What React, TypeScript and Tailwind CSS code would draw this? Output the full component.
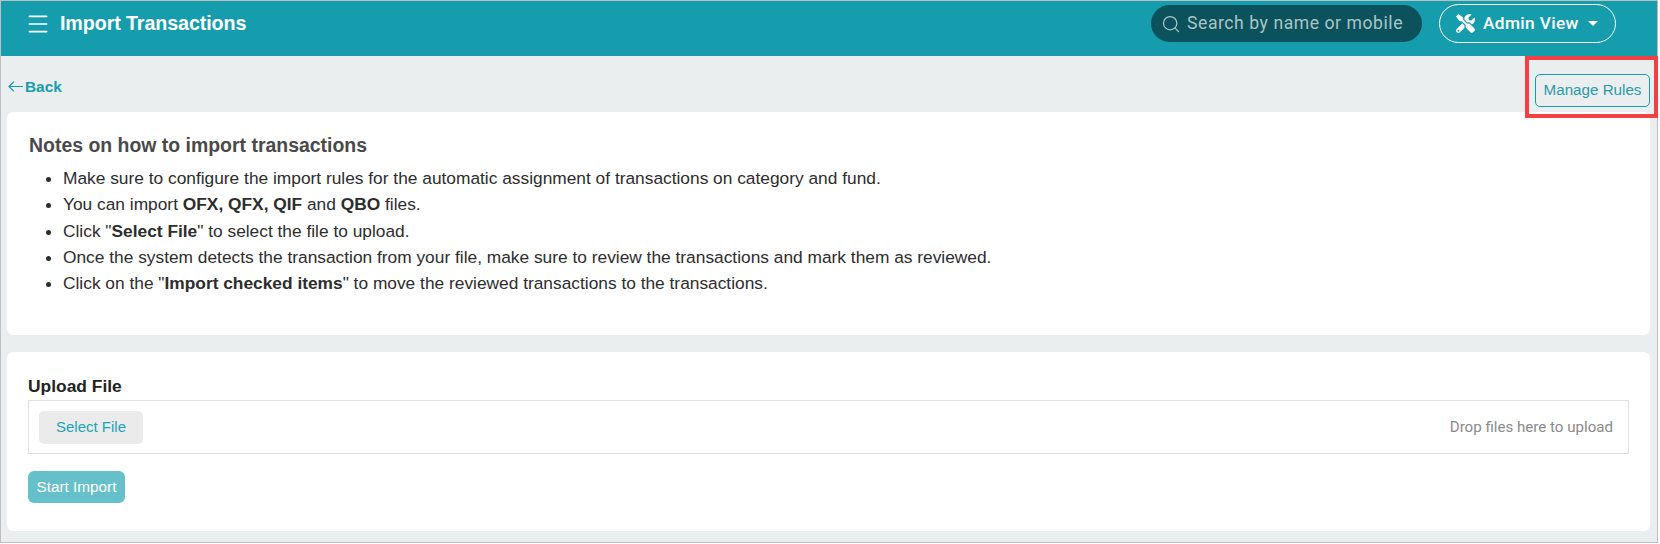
import React from "react";
import { Menu, Search } from "lucide-react";

function Tools() {
  return (
    <svg width="19" height="19" viewBox="0 0 512 512" fill="white" className="shrink-0">
      <path d="M501.1 395.7 384 278.6c-23.1-23.1-57.6-27.6-85.4-13.9L192 158.1V96L64 0 0 64l96 128h62.1l106.6 106.6c-13.6 27.8-9.2 62.3 13.9 85.4l117.1 117.1c14.6 14.6 38.2 14.6 52.7 0l52.7-52.7c14.5-14.6 14.5-38.2 0-52.7zM331.7 225c28.3 0 54.9 11 74.9 31l19.4 19.4c15.8-6.9 30.8-16.5 43.8-29.5 37.1-37.1 49.7-89.3 37.9-136.7-2.2-9-13.5-12.1-20.1-5.5l-74.4 74.4-67.9-11.3L334 98.9l74.4-74.4c6.6-6.6 3.4-17.9-5.7-20.2-47.4-11.7-99.6.9-136.6 37.9-28.5 28.5-41.9 66.1-41.2 103.6l82.1 82.1c8.1-1.9 16.5-2.9 24.7-2.9zm-103.9 82-56.7-56.7L18.7 402.8c-25 25-25 65.5 0 90.5s65.5 25 90.5 0l123.6-123.6c-7.6-19.9-9.9-41.6-5-62.7zM64 472c-13.2 0-24-10.8-24-24 0-13.3 10.7-24 24-24s24 10.7 24 24c0 13.2-10.7 24-24 24z" />
    </svg>
  );
}

export default function App() {
  return (
    <div className="w-[1660px] h-[544px] bg-white overflow-hidden font-['Liberation_Sans',Arial,sans-serif]">
      <div className="relative w-[1658px] h-[543px] border border-[#bdbfc0] bg-[#ebeeef] flex flex-col">
        <header className="h-[55px] shrink-0 bg-[#159dad] flex items-center pl-[27px] pr-[41px] pb-[10px] text-white">
          <Menu size={26} strokeWidth={1.5} className="-ml-[3px]" />
          <span className="ml-[9px] text-[19.7px] font-bold leading-none tracking-[-0.1px]">Import Transactions</span>
          <div className="ml-auto flex items-center gap-[17px]">
            <div className="w-[271px] h-[37px] rounded-full bg-[#0b525c] flex items-center pl-[10px] text-[#a9c5c8]">
              <Search size={20} strokeWidth={1.5} />
              <span className="ml-[6px] font-['Roboto',sans-serif] text-[17.6px] tracking-[0.55px]">Search by name or mobile</span>
            </div>
            <div className="w-[177px] h-[39px] rounded-full border border-white flex items-center pl-[16px]">
              <Tools />
              <span className="ml-[8px] font-['Roboto',sans-serif] font-medium text-[17.3px] tracking-[0.35px]">Admin View</span>
              <span className="ml-[9px] w-0 h-0 border-x-[5px] border-x-transparent border-t-[5px] border-t-white" />
            </div>
          </div>
        </header>

        <div className="h-[56px] shrink-0 flex items-start justify-between pl-[7px] pr-[7px] pt-[18px]">
          <div className="flex items-center text-[#159dad] mt-[4px]">
            <svg width="15" height="11" viewBox="0 0 15 11" fill="none" stroke="currentColor" strokeWidth="1.2" className="shrink-0">
              <path d="M1 5.5h14M6 .6 1 5.5l5 4.9" />
            </svg>
            <span className="ml-[2px] text-[15.4px] font-bold leading-[17px]">Back</span>
          </div>
          <button className="w-[115px] h-[33px] rounded-[5px] border border-[#159dad] text-[#2a9aa8] text-[15.2px] flex items-center justify-center pb-[1px]">Manage Rules</button>
        </div>

        <div className="mx-[6px] w-[1643px] flex flex-col gap-[17px]">
          <section className="h-[223px] bg-white rounded-[6px] pl-[22px] pt-[22px]">
            <h2 className="text-[19.45px] font-bold leading-[22px] text-[#4a4a4a]">Notes on how to import transactions</h2>
            <ul className="list-disc pl-[34px] mt-[9px] text-[17.33px] leading-[26.3px] text-[#2d2d2d]">
              <li>Make sure to configure the import rules for the automatic assignment of transactions on category and fund.</li>
              <li>You can import <b>OFX, QFX, QIF</b> and <b>QBO</b> files.</li>
              <li>Click "<b>Select File</b>" to select the file to upload.</li>
              <li>Once the system detects the transaction from your file, make sure to review the transactions and mark them as reviewed.</li>
              <li>Click on the "<b>Import checked items</b>" to move the reviewed transactions to the transactions.</li>
            </ul>
          </section>

          <section className="h-[179px] bg-white rounded-[6px] pl-[21px] pr-[21px] pt-[24px]">
            <div className="text-[17.4px] font-bold leading-[20px] text-[#222]">Upload File</div>
            <div className="mt-[4px] h-[54px] border border-[#e0e0e0] flex items-center justify-between pl-[10px] pr-[15px]">
              <div className="w-[104px] h-[33px] rounded-[5px] bg-[#ebebeb] text-[#20a3b3] text-[15px] flex items-center justify-center">Select File</div>
              <span className="font-['Roboto',sans-serif] text-[15.1px] text-[#8a8a8a]">Drop files here to upload</span>
            </div>
            <div className="mt-[17px] w-[97px] h-[32px] rounded-[6px] bg-[#66c0ca] text-white text-[15.3px] flex items-center justify-center">Start Import</div>
          </section>
        </div>

        <div className="absolute left-[1524px] top-[55px] w-[133px] h-[62px] border-[4px] border-[#f44043] pointer-events-none" />
      </div>
    </div>
  );
}
